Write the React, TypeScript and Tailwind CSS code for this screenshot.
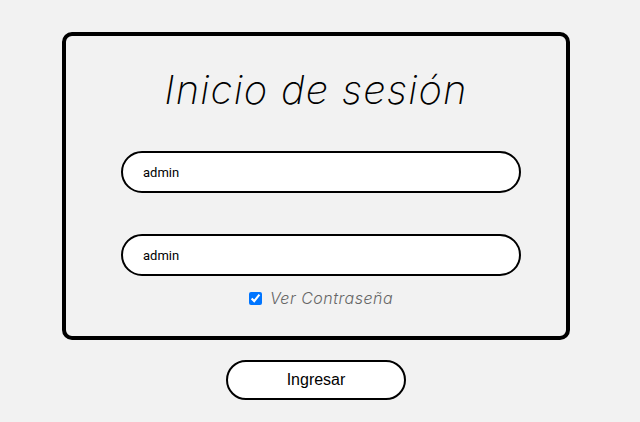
export default function App() {
  return (
    <div className="min-h-[422px] w-[640px] bg-[#f2f2f2] pt-8">
      <div className="flex w-[632px] flex-col items-center">
        <div className="flex h-[308px] w-[508px] flex-col items-center rounded-[10px] border-4 border-black">
          <h1 className="mt-[26px] font-['Inter',sans-serif] text-[40px] font-extralight italic leading-[56px] tracking-[1.2px] text-black">
            Inicio de sesión
          </h1>
          <input
            type="text"
            defaultValue="admin"
            className="ml-[10px] mt-[33px] h-[42px] w-[400px] rounded-full border-2 border-black bg-white pl-5 font-['Roboto',sans-serif] text-[13px] text-black outline-none"
          />
          <input
            type="text"
            defaultValue="admin"
            className="ml-[10px] mt-[41px] h-[42px] w-[400px] rounded-full border-2 border-black bg-white pl-5 font-['Roboto',sans-serif] text-[13px] text-black outline-none"
          />
          <label className="ml-[10px] mt-[10px] flex items-center gap-2 font-['Inter',sans-serif] text-[16px] font-light italic tracking-[0.5px] text-[#666]">
            <input type="checkbox" defaultChecked className="h-[13px] w-[13px] accent-[#0075ff]" />
            Ver Contraseña
          </label>
        </div>
        <button className="mt-5 h-[40px] w-[180px] rounded-full border-2 border-black bg-white font-['Liberation_Sans',Arial,sans-serif] text-base text-black">
          Ingresar
        </button>
      </div>
    </div>
  )
}
